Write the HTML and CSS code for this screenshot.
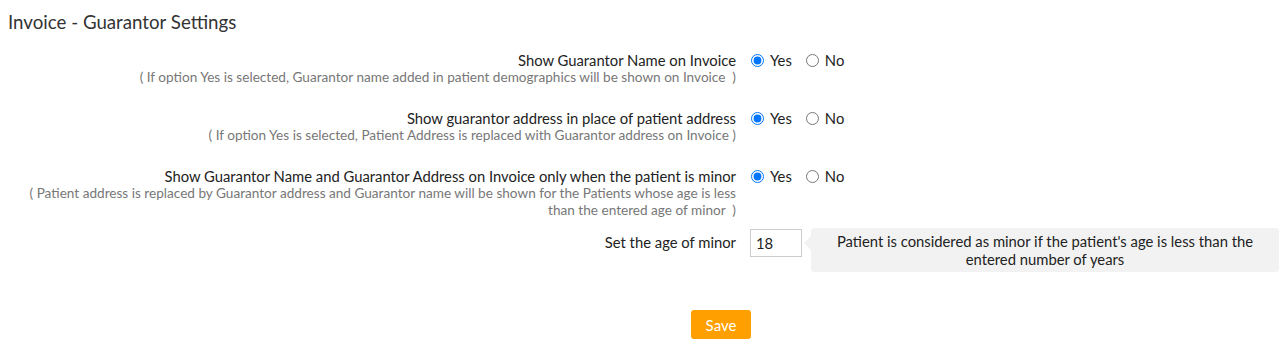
FILE: index.html
```html
<!DOCTYPE html>
<html lang="en">
<head>
    <meta charset="UTF-8">
    <title>Invoice - Guarantor Settings</title>
    <link rel="stylesheet" href="styles.css">
</head>
<body>
    <div class="settings-page">
        <h3 class="page-title">Invoice - Guarantor Settings</h3>

        <div class="settings-row">
            <div class="label-col">
                <div class="setting-label">Show Guarantor Name on Invoice</div>
                <div class="setting-hint">( If option Yes is selected, Guarantor name added in patient demographics will be shown on Invoice&nbsp; )</div>
            </div>
            <div class="control-col">
                <label class="radio-opt"><input type="radio" name="gname" checked> Yes</label>
                <label class="radio-opt"><input type="radio" name="gname"> No</label>
            </div>
        </div>

        <div class="settings-row">
            <div class="label-col">
                <div class="setting-label">Show guarantor address in place of patient address</div>
                <div class="setting-hint">( If option Yes is selected, Patient Address is replaced with Guarantor address on Invoice )</div>
            </div>
            <div class="control-col">
                <label class="radio-opt"><input type="radio" name="gaddr" checked> Yes</label>
                <label class="radio-opt"><input type="radio" name="gaddr"> No</label>
            </div>
        </div>

        <div class="settings-row">
            <div class="label-col">
                <div class="setting-label">Show Guarantor Name and Guarantor Address on Invoice only when the patient is minor</div>
                <div class="setting-hint">( Patient address is replaced by Guarantor address and Guarantor name will be shown for the Patients whose age is less than the entered age of minor&nbsp; )</div>
            </div>
            <div class="control-col">
                <label class="radio-opt"><input type="radio" name="gminor" checked> Yes</label>
                <label class="radio-opt"><input type="radio" name="gminor"> No</label>
            </div>
        </div>

        <div class="settings-row age-row">
            <div class="label-col">
                <div class="setting-label">Set the age of minor</div>
            </div>
            <div class="control-col">
                <input type="text" class="age-input" value="18">
                <div class="age-tip">Patient is considered as minor if the patient's age is less than the entered number of years</div>
            </div>
        </div>

        <div class="actions">
            <button class="save-btn">Save</button>
        </div>
    </div>
</body>
</html>
```

FILE: styles.css
```css
body {
    margin: 0;
    font-family: Lato, "Open Sans", sans-serif;
    color: #333;
    background: #fff;
}

.settings-page {
    padding: 11px 0 0 8px;
}

.page-title {
    margin: 0 0 19px;
    font-size: 18.7px;
    line-height: 22px;
    font-weight: normal;
    color: #333;
}

.settings-row {
    display: flex;
    align-items: flex-start;
    margin-bottom: 24px;
}

.label-col {
    width: 728px;
    flex: 0 0 auto;
    text-align: right;
}

.setting-label {
    font-size: 14.8px;
    line-height: 17px;
    color: #222;
}

.setting-hint {
    font-size: 13.6px;
    line-height: 17px;
    color: #777;
}

.control-col {
    display: flex;
    align-items: center;
    margin-left: 14px;
    font-size: 14.8px;
    line-height: 17px;
    color: #222;
}

.radio-opt {
    display: flex;
    align-items: center;
    margin-right: 13px;
}

.radio-opt input {
    margin: 0 6px 0 1px;
    width: 13px;
    height: 13px;
}

.age-row {
    margin-top: -14px;
}

.age-row .label-col {
    padding-top: 5px;
}

.age-row .control-col {
    align-items: flex-start;
}

.age-input {
    width: 40px;
    height: 26px;
    padding: 0 5px;
    border: 1px solid #ccc;
    font-family: inherit;
    font-size: 14.8px;
    color: #222;
    box-sizing: content-box;
}

.age-tip {
    position: relative;
    width: 440px;
    margin: -1px 0 0 9px;
    padding: 4px 14px;
    background: #f2f2f2;
    border-radius: 3px;
    text-align: center;
    font-size: 14.8px;
    line-height: 18px;
    color: #222;
}

.age-tip::before {
    content: "";
    position: absolute;
    left: -7px;
    top: 8px;
    border-top: 7px solid transparent;
    border-bottom: 7px solid transparent;
    border-right: 7px solid #f2f2f2;
}

.actions {
    padding: 14px 0 0 683px;
}

.save-btn {
    width: 60px;
    height: 29px;
    background: #ff9f00;
    color: #fff;
    border: none;
    border-radius: 3px;
    font-family: inherit;
    font-size: 15px;
    cursor: pointer;
}
```
